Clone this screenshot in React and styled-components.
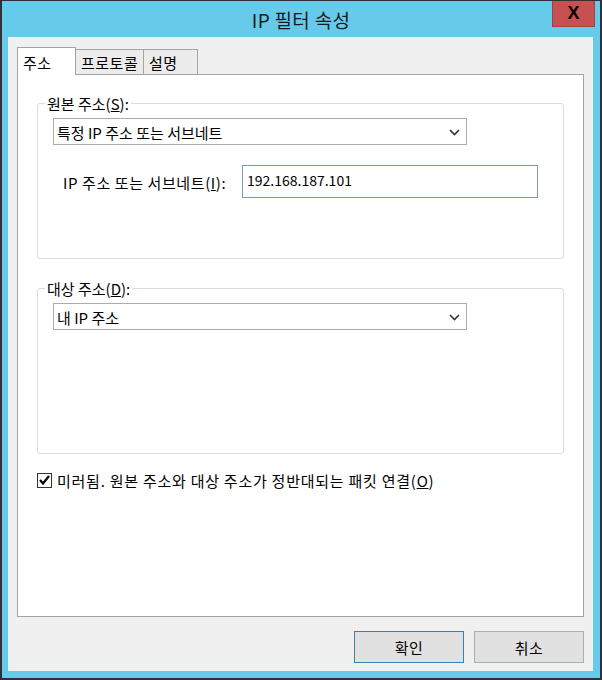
import React from 'react';
import styled, { createGlobalStyle } from 'styled-components';

const GlobalStyle = createGlobalStyle`
  html, body {
    margin: 0;
    padding: 0;
    background: #ffffff;
  }
  body {
    font-family: "Noto Sans CJK KR", "Noto Sans", sans-serif;
    font-size: 15px;
    color: #000000;
  }
  * {
    box-sizing: border-box;
  }
`;

const Window = styled.div`
  width: 602px;
  height: 680px;
  display: flex;
  flex-direction: column;
  background: #66cbea;
  border: 2px solid #2f3136;
  border-top-width: 1px;
`;

const TitleBar = styled.div`
  height: 36px;
  display: grid;
  grid-template-columns: 1fr auto 1fr;
  align-items: start;
`;

const Title = styled.div`
  grid-column: 2;
  align-self: center;
  font-size: 19px;
  letter-spacing: 0.3px;
  color: #1a1a1a;
  line-height: 1;
  padding-top: 1px;
`;

const CloseButton = styled.div`
  grid-column: 3;
  justify-self: end;
  margin-right: 5px;
  width: 43px;
  height: 26px;
  background: #c75050;
  border: 1px solid #a34040;
  border-top: none;
  display: flex;
  align-items: center;
  justify-content: center;
  font-family: "Liberation Sans", Arial, sans-serif;
  font-weight: bold;
  font-size: 18px;
  color: #000000;
`;

const Client = styled.div`
  flex: 1;
  margin: 0 7px 7px 6px;
  background: #f0f0f0;
  display: flex;
  flex-direction: column;
  padding: 10px 9px 8px 9px;
`;

const TabStrip = styled.div`
  display: flex;
  align-items: flex-end;
  height: 28px;
  margin-bottom: -1px;
  position: relative;
  z-index: 1;
`;

const Tab = styled.div`
  width: ${p => p.$w}px;
  height: ${p => (p.$active ? 28 : 25)}px;
  margin-bottom: ${p => (p.$active ? 0 : 1)}px;
  margin-left: ${p => (p.$first ? 0 : -1)}px;
  background: ${p => (p.$active ? '#ffffff' : '#ececec')};
  border: 1px solid #a3a3a3;
  border-bottom: none;
  padding-left: 5px;
  padding-top: ${p => (p.$active ? 2 : 0)}px;
  display: flex;
  align-items: center;
  position: relative;
  z-index: ${p => (p.$active ? 2 : 1)};
  line-height: 1;
  letter-spacing: 0.5px;
`;

const Panel = styled.div`
  flex: 1;
  background: #ffffff;
  border: 1px solid #a3a3a3;
  padding: 18px 19px 0 19px;
  display: flex;
  flex-direction: column;
`;

const GroupBox = styled.fieldset`
  margin: 0 0 ${p => p.$gap || 0}px 0;
  padding: 4px 0 ${p => p.$bottom}px 7px;
  border: 1px solid #dcdcdc;
  border-radius: 3px;
  min-width: 0;
`;

const Legend = styled.legend`
  padding: 0 2px;
  line-height: 21px;
  font-size: 15px;
`;

const GroupBody = styled.div`
  padding-left: 8px;
  display: flex;
  flex-direction: column;
`;

const Combo = styled.div`
  width: 414px;
  height: 27px;
  background: #ffffff;
  border: 1px solid #acacac;
  display: flex;
  align-items: center;
  justify-content: space-between;
  padding: 1px 6px 0 3px;
  line-height: 1;
`;

const FieldRow = styled.div`
  display: flex;
  align-items: center;
  margin-top: 20px;
`;

const FieldLabel = styled.div`
  width: 189px;
  padding-left: 10px;
  padding-top: 1px;
  line-height: 1;
  letter-spacing: 0.6px;
`;

const TextInput = styled.div`
  width: 296px;
  height: 33px;
  border: 1px solid #7a9bbe;
  background: #ffffff;
  padding: 6px 0 0 4px;
  font-size: 14px;
  line-height: 1.2;
`;

const CheckRow = styled.div`
  display: flex;
  align-items: center;
  margin-top: 18px;
  gap: 5px;
`;

const CheckBox = styled.div`
  width: 15px;
  height: 15px;
  border: 1px solid #333333;
  background: #ffffff;
  display: flex;
  align-items: center;
  justify-content: center;
`;

const CheckLabel = styled.div`
  line-height: 1;
  padding-top: 1px;
  letter-spacing: 0.75px;
`;

const ButtonRow = styled.div`
  display: flex;
  justify-content: flex-end;
  gap: 10px;
  margin-top: 14px;
`;

const Button = styled.div`
  width: 110px;
  height: 32px;
  background: #e1e1e1;
  border: 1px solid ${p => (p.$default ? '#3c7fb1' : '#adadad')};
  box-shadow: ${p => (p.$default ? 'inset 0 0 0 1px #e1e1e1' : 'none')};
  display: flex;
  align-items: center;
  justify-content: center;
  line-height: 1;
  letter-spacing: 0.5px;
`;

const Key = styled.span`
  text-decoration: underline;
`;

const Chevron = () => (
  <svg width="11" height="7" viewBox="0 0 11 7">
    <polyline points="1,1 5.5,5.5 10,1" fill="none" stroke="#333" strokeWidth="1.6" />
  </svg>
);

const Check = () => (
  <svg width="11" height="10" viewBox="0 0 11 10">
    <polyline points="1,5 4,8.5 10,1" fill="none" stroke="#000" strokeWidth="2.2" />
  </svg>
);

export default function App() {
  return (
    <>
      <GlobalStyle />
      <Window>
        <TitleBar>
          <Title>IP 필터 속성</Title>
          <CloseButton>X</CloseButton>
        </TitleBar>
        <Client>
          <TabStrip>
            <Tab $active $first $w={59}>주소</Tab>
            <Tab $w={69}>프로토콜</Tab>
            <Tab $w={55}>설명</Tab>
          </TabStrip>
          <Panel>
            <GroupBox $bottom={60} $gap={19}>
              <Legend>원본 주소(<Key>S</Key>):</Legend>
              <GroupBody>
                <Combo>
                  <span>특정 IP 주소 또는 서브네트</span>
                  <Chevron />
                </Combo>
                <FieldRow>
                  <FieldLabel>IP 주소 또는 서브네트(<Key>I</Key>):</FieldLabel>
                  <TextInput>192.168.187.101</TextInput>
                </FieldRow>
              </GroupBody>
            </GroupBox>
            <GroupBox $bottom={123}>
              <Legend>대상 주소(<Key>D</Key>):</Legend>
              <GroupBody>
                <Combo>
                  <span>내 IP 주소</span>
                  <Chevron />
                </Combo>
              </GroupBody>
            </GroupBox>
            <CheckRow>
              <CheckBox><Check /></CheckBox>
              <CheckLabel>미러됨. 원본 주소와 대상 주소가 정반대되는 패킷 연결(<Key>O</Key>)</CheckLabel>
            </CheckRow>
          </Panel>
          <ButtonRow>
            <Button $default>확인</Button>
            <Button>취소</Button>
          </ButtonRow>
        </Client>
      </Window>
    </>
  );
}
